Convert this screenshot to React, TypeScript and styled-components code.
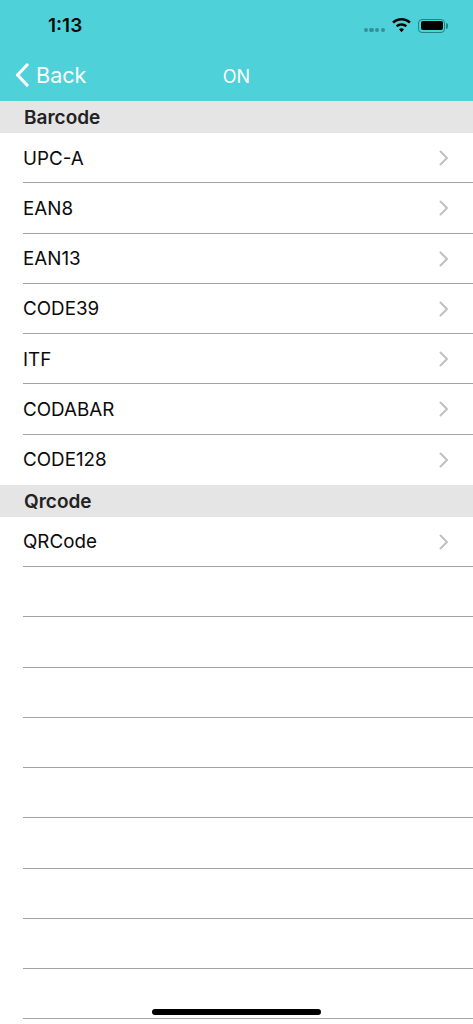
import styled, { createGlobalStyle } from "styled-components";

const GlobalStyle = createGlobalStyle`
  html, body {
    margin: 0;
    padding: 0;
    background: #fff;
  }
  body {
    font-family: Inter, "Liberation Sans", sans-serif;
  }
`;

const Screen = styled.div`
  position: relative;
  width: 473px;
  height: 1024px;
  overflow: hidden;
  background: #fff;
`;

const Header = styled.header`
  height: 101px;
  background: #4fd1d9;
  display: flex;
  flex-direction: column;
`;

const StatusBar = styled.div`
  height: 51px;
  display: flex;
  align-items: center;
  padding: 0 25px 0 48px;
  box-sizing: border-box;
`;

const Time = styled.span`
  font-size: 19px;
  font-weight: 600;
  color: #0a0a0a;
  flex: 1;
`;

const SignalDots = styled.div`
  display: flex;
  gap: 1.5px;
  margin: 9px 7px 0 0;
`;

const Dot = styled.i`
  width: 4.2px;
  height: 4.5px;
  border-radius: 50%;
  background: #35909a;
`;

const Battery = styled.div`
  position: relative;
  width: 27px;
  height: 14px;
  margin: 0 3px 0 7px;
  padding: 1.5px;
  box-sizing: border-box;
  border: 1px solid #2a7f88;
  border-radius: 4px;
  &::after {
    content: "";
    position: absolute;
    right: -4px;
    top: 3px;
    width: 2px;
    height: 6px;
    border-radius: 0 2px 2px 0;
    background: #2a7f88;
  }
`;

const BatteryFill = styled.div`
  height: 100%;
  background: #000;
  border-radius: 2px;
`;

const NavBar = styled.nav`
  position: relative;
  flex: 1;
  display: flex;
  align-items: center;
  padding-left: 15px;
`;

const BackButton = styled.div`
  display: flex;
  align-items: center;
  gap: 7px;
  color: #fff;
  font-size: 21.6px;
  margin-top: -2px;
`;

const NavTitle = styled.div`
  position: absolute;
  left: 0;
  right: 0;
  top: 15px;
  text-align: center;
  color: #fff;
  font-size: 18px;
  line-height: 22px;
`;

const SectionHeader = styled.div`
  height: 32px;
  line-height: 33px;
  padding-left: 24px;
  background: #e5e5e5;
  color: #222;
  font-size: 19px;
  font-weight: 600;
`;

const Row = styled.div<{ $last?: boolean }>`
  height: 50.25px;
  margin-left: 23px;
  padding: 1px 24px 0 0;
  box-sizing: border-box;
  border-bottom: 1px solid ${(p) => (p.$last ? "transparent" : "#a3a3a3")};
  display: flex;
  align-items: center;
  justify-content: space-between;
  color: #0a0a0a;
  font-size: 18.8px;
`;

const Chevron = () => (
  <svg width="10" height="16" viewBox="0 0 10 16" fill="none">
    <path d="M1.5 1.5 8 8l-6.5 6.5" stroke="#c0c0c0" strokeWidth="2" strokeLinecap="round" strokeLinejoin="round" />
  </svg>
);

const HomeIndicator = styled.div`
  position: absolute;
  left: 152px;
  bottom: 9px;
  width: 169px;
  height: 6px;
  border-radius: 3px;
  background: #000;
`;

const barcodes = ["UPC-A", "EAN8", "EAN13", "CODE39", "ITF", "CODABAR", "CODE128"];
const emptyRows = Array.from({ length: 9 }, (_, i) => i);

export default function App() {
  return (
    <Screen>
      <GlobalStyle />
      <Header>
        <StatusBar>
          <Time>1:13</Time>
          <SignalDots>
            <Dot />
            <Dot />
            <Dot />
            <Dot />
          </SignalDots>
          <svg width="19" height="15" viewBox="0 0 19 15" fill="#000">
            <path d="M9.5 0C13 0 16.3 1.3 18.8 3.7L17 5.6C15 3.7 12.3 2.6 9.5 2.6S4 3.7 2 5.6L.2 3.7C2.7 1.3 6 0 9.5 0Z" />
            <path d="M9.5 5.2c2.1 0 4.1.8 5.7 2.2l-1.8 1.9c-1-1-2.4-1.5-3.9-1.5s-2.9.5-3.9 1.5L3.8 7.4C5.4 6 7.4 5.2 9.5 5.2Z" />
            <path d="M9.5 10.2c1 0 1.9.4 2.5 1L9.5 14.2 7 11.2c.6-.6 1.5-1 2.5-1Z" />
          </svg>
          <Battery>
            <BatteryFill />
          </Battery>
        </StatusBar>
        <NavBar>
          <BackButton>
            <svg width="14" height="24" viewBox="0 0 14 24" fill="none">
              <path d="M12 2 2.5 12 12 22" stroke="#fff" strokeWidth="3.2" strokeLinecap="round" strokeLinejoin="round" />
            </svg>
            Back
          </BackButton>
          <NavTitle>ON</NavTitle>
        </NavBar>
      </Header>
      <SectionHeader>Barcode</SectionHeader>
      {barcodes.map((name, i) => (
        <Row key={name} $last={i === barcodes.length - 1}>
          {name}
          <Chevron />
        </Row>
      ))}
      <SectionHeader>Qrcode</SectionHeader>
      <Row>
        QRCode
        <Chevron />
      </Row>
      {emptyRows.map((i) => (
        <Row key={i} />
      ))}
      <HomeIndicator />
    </Screen>
  );
}
